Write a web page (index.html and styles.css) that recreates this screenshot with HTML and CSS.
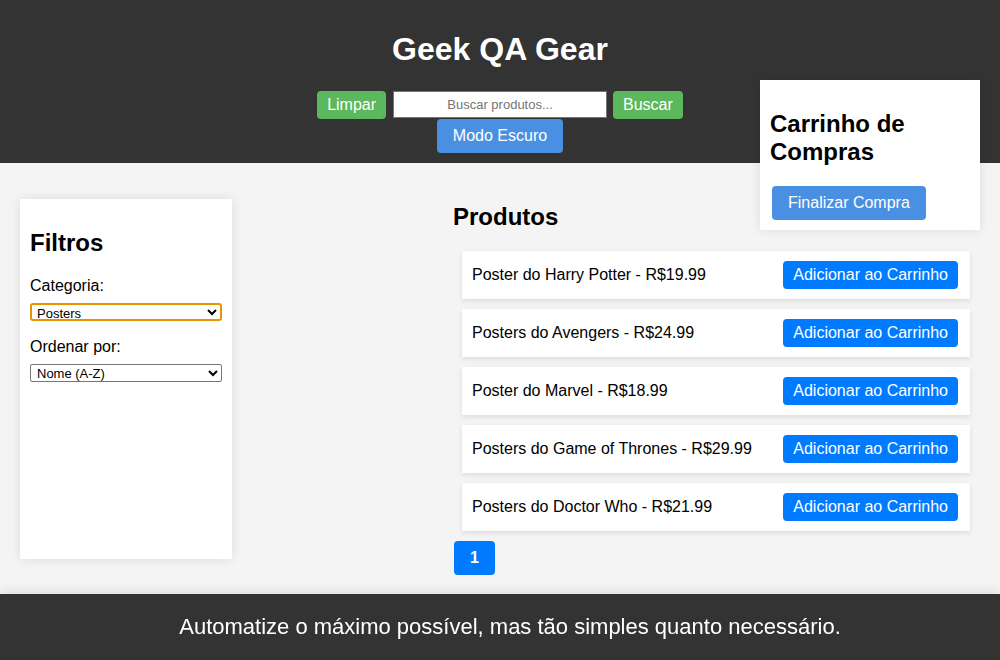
FILE: index.html
```html
<!DOCTYPE html>
<html lang="pt-BR">
<head>
<meta charset="utf-8">
<title>Geek QA Gear</title>
<link rel="stylesheet" href="styles.css">
</head>
<body>
<header class="header">
  <h1 class="title">Geek QA Gear</h1>
  <div class="search-row">
    <button class="btn btn-green">Limpar</button>
    <input class="search-input" type="text" placeholder="Buscar produtos...">
    <button class="btn btn-green">Buscar</button>
  </div>
  <div class="mode-row">
    <button class="btn btn-mode">Modo Escuro</button>
  </div>
</header>

<aside class="cart">
  <h2 class="cart-title">Carrinho de Compras</h2>
  <button class="btn btn-checkout">Finalizar Compra</button>
</aside>

<main class="main">
  <section class="filters">
    <h2 class="section-title">Filtros</h2>
    <label class="filter-label" for="cat">Categoria:</label>
    <select id="cat" class="filter-select focused">
      <option>Posters</option>
    </select>
    <label class="filter-label" for="ord">Ordenar por:</label>
    <select id="ord" class="filter-select">
      <option>Nome (A-Z)</option>
    </select>
  </section>

  <section class="products">
    <h2 class="section-title products-title">Produtos</h2>
    <ul class="product-list">
      <li class="product"><span>Poster do Harry Potter - R$19.99</span><button class="btn btn-add">Adicionar ao Carrinho</button></li>
      <li class="product"><span>Posters do Avengers - R$24.99</span><button class="btn btn-add">Adicionar ao Carrinho</button></li>
      <li class="product"><span>Poster do Marvel - R$18.99</span><button class="btn btn-add">Adicionar ao Carrinho</button></li>
      <li class="product"><span>Posters do Game of Thrones - R$29.99</span><button class="btn btn-add">Adicionar ao Carrinho</button></li>
      <li class="product"><span>Posters do Doctor Who - R$21.99</span><button class="btn btn-add">Adicionar ao Carrinho</button></li>
    </ul>
    <div class="pagination">
      <button class="btn btn-page">1</button>
    </div>
  </section>
</main>

<footer class="footer">
  <p class="footer-text">Automatize o máximo possível, mas tão simples quanto necessário.</p>
</footer>
</body>
</html>
```

FILE: styles.css
```css
* { box-sizing: border-box; }

html, body {
  margin: 0;
  padding: 0;
}

body {
  font-family: "Liberation Sans", Arial, sans-serif;
  background: #f4f4f4;
  color: #000;
  font-size: 16px;
  height: 660px;
  overflow: hidden;
}

.header {
  background: #333;
  color: #fff;
  padding: 10px 0;
  text-align: center;
  height: 163px;
}

.title {
  font-size: 32px;
  line-height: 37px;
  margin: 21px 0 22px;
  font-weight: bold;
}

.search-row {
  display: flex;
  justify-content: center;
  align-items: center;
  gap: 6px;
  height: 29px;
}

.search-row .btn:first-child { margin-right: 1px; }

.mode-row {
  display: flex;
  justify-content: center;
}

.btn {
  font-family: "Liberation Sans", Arial, sans-serif;
  font-size: 16px;
  line-height: 18px;
  border: none;
  border-radius: 4px;
  color: #fff;
  cursor: pointer;
}

.btn-green {
  background: #5cb85c;
  padding: 5px 10px;
}

.search-input {
  width: 214px;
  height: 27px;
  border: 1px solid #767676;
  border-radius: 0;
  text-align: center;
  font-family: "Liberation Sans", Arial, sans-serif;
  font-size: 13px;
  background: #fff;
}

.search-input::placeholder { color: #757575; }

.btn-mode {
  background: #4a90e2;
  padding: 8px 16px;
}

.cart {
  position: absolute;
  top: 80px;
  left: 760px;
  width: 220px;
  height: 150px;
  background: #fff;
  padding: 10px;
  box-shadow: 0 0 10px rgba(0, 0, 0, 0.1);
}

.cart-title {
  font-size: 24px;
  line-height: 28px;
  margin: 20px 0 20px;
}

.btn-checkout {
  background: #4a90e2;
  padding: 8px 16px;
  margin-left: 2px;
}

.main {
  display: flex;
  align-items: flex-start;
  padding: 0 20px;
}

.filters {
  width: 212px;
  height: 360px;
  margin-top: 36px;
  background: #fff;
  padding: 10px;
  box-shadow: 0 0 10px rgba(0, 0, 0, 0.1);
}

.section-title {
  font-size: 24px;
  line-height: 28px;
  margin: 20px 0 20px;
  font-weight: bold;
}

.filter-label {
  display: block;
  line-height: 18px;
  margin-bottom: 8px;
}

.filter-select {
  display: block;
  width: 192px;
  height: 18px;
  font-family: "Liberation Sans", Arial, sans-serif;
  font-size: 13px;
  border: 1px solid #767676;
  border-radius: 2px;
  background: #fff;
  color: #000;
  padding: 0 2px;
  margin-bottom: 17px;
}

.filter-select.focused {
  border: 2px solid #e69500;
  border-radius: 3px;
  padding: 0 1px;
}

.products {
  width: 528px;
  margin-left: auto;
  padding-top: 20px;
}

.products-title { margin: 20px 0 20px 1px; }

.product-list {
  list-style: none;
  margin: 0;
  padding: 0;
}

.product {
  display: flex;
  justify-content: space-between;
  align-items: center;
  background: #fff;
  margin: 0 10px 10px 10px;
  height: 48px;
  padding: 10px 12px 10px 10px;
  box-shadow: 0 2px 5px rgba(0, 0, 0, 0.1);
  line-height: 18px;
}

.btn-add {
  background: #007bff;
  padding: 5px 10px;
}

.pagination {
  display: flex;
  padding-left: 2px;
}

.btn-page {
  background: #007bff;
  padding: 8px 16px;
  font-weight: bold;
}

.footer {
  position: fixed;
  left: 0;
  right: 0;
  bottom: 0;
  height: 66px;
  padding-left: 20px;
  background: #333;
  color: #fff;
  text-align: center;
  box-shadow: 0 -2px 10px rgba(0, 0, 0, 0.1);
}

.footer-text {
  margin: 0;
  font-size: 22px;
  line-height: 25px;
  padding-top: 20px;
}
```
